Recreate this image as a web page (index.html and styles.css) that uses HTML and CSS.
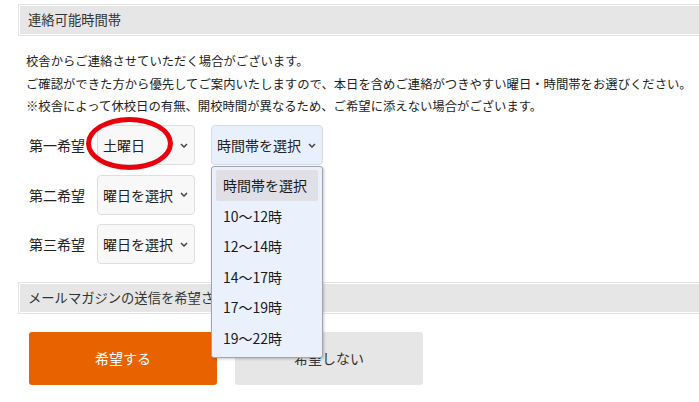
FILE: index.html
```html
<!DOCTYPE html>
<html lang="ja">
<head>
<meta charset="utf-8">
<title>連絡可能時間帯</title>
<link rel="stylesheet" href="styles.css">
</head>
<body>
<div class="page">
  <div class="sec-head">連絡可能時間帯</div>
  <div class="intro">
    <p>校舎からご連絡させていただく場合がございます。</p>
    <p>ご確認ができた方から優先してご案内いたしますので、本日を含めご連絡がつきやすい曜日・時間帯をお選びください。</p>
    <p>※校舎によって休校日の有無、開校時間が異なるため、ご希望に添えない場合がございます。</p>
  </div>
  <div class="rows">
    <div class="row">
      <span class="label">第一希望</span>
      <div class="sel day"><span>土曜日</span><svg class="chev" viewBox="0 0 8 5"><path d="M1 1l3 3 3-3"/></svg></div>
      <div class="sel time open"><span>時間帯を選択</span><svg class="chev" viewBox="0 0 8 5"><path d="M1 1l3 3 3-3"/></svg>
        <ul class="dropdown">
          <li class="hl">時間帯を選択</li>
          <li>10〜12時</li>
          <li>12〜14時</li>
          <li>14〜17時</li>
          <li>17〜19時</li>
          <li>19〜22時</li>
        </ul>
      </div>
      <div class="circle"></div>
    </div>
    <div class="row">
      <span class="label">第二希望</span>
      <div class="sel day"><span>曜日を選択</span><svg class="chev" viewBox="0 0 8 5"><path d="M1 1l3 3 3-3"/></svg></div>
    </div>
    <div class="row">
      <span class="label">第三希望</span>
      <div class="sel day"><span>曜日を選択</span><svg class="chev" viewBox="0 0 8 5"><path d="M1 1l3 3 3-3"/></svg></div>
    </div>
  </div>
  <div class="sec-head sec2">メールマガジンの送信を希望されますか</div>
  <div class="buttons">
    <div class="btn yes">希望する</div>
    <div class="btn no">希望しない</div>
  </div>
</div>
</body>
</html>
```
FILE: styles.css
```css
html, body {
  margin: 0;
  padding: 0;
  background: #fff;
}
body {
  width: 699px;
  height: 402px;
  overflow: hidden;
  font-family: "Noto Sans CJK JP", "Noto Sans", sans-serif;
  color: #222;
}
.page {
  padding-top: 5px;
}
.sec-head {
  margin-left: 19px;
  margin-right: -20px;
  height: 30px;
  box-sizing: border-box;
  border: 1px solid #fff;
  box-shadow: 0 0 0 1px #e3e3e3;
  background: #e6e6e6;
  padding-left: 8px;
  font-size: 13.3px;
  line-height: 28px;
  color: #333;
  white-space: nowrap;
  overflow: hidden;
}
.intro {
  margin: 15px 0 0 26px;
  font-size: 12.35px;
  line-height: 22.5px;
}
.intro p {
  margin: 0;
  white-space: nowrap;
}
.rows {
  margin-top: 7.5px;
  display: flex;
  flex-direction: column;
  gap: 9.5px;
}
.row {
  position: relative;
  display: flex;
  align-items: center;
  height: 40px;
  padding-left: 29px;
  font-size: 14px;
}
.label {
  width: 56px;
  margin-right: 12px;
  white-space: nowrap;
}
.sel {
  position: relative;
  height: 40px;
  box-sizing: border-box;
  border: 1px solid #dedede;
  border-radius: 4px;
  background: #f8f8f8;
  display: flex;
  align-items: center;
  justify-content: space-between;
  padding: 0 6px 0 5px;
  white-space: nowrap;
}
.sel.day {
  width: 98px;
}
.sel.time {
  width: 112px;
  margin-left: 16px;
}
.sel.open {
  background: #e8f0fe;
  border-color: #d6dbe4;
}
.chev {
  width: 8px;
  height: 5px;
  flex: none;
  fill: none;
  stroke: #444;
  stroke-width: 1.5;
}
.dropdown {
  position: absolute;
  left: -1px;
  top: 40px;
  width: 112px;
  height: 192px;
  box-sizing: border-box;
  margin: 0;
  padding: 3px 4px;
  list-style: none;
  background: #eaf1fc;
  border: 1px solid #a3a3a8;
  border-radius: 3px;
  box-shadow: 1px 1px 3px rgba(0, 0, 0, 0.22);
  z-index: 5;
}
.dropdown li {
  height: 30.6px;
  line-height: 30.6px;
  padding-left: 7px;
  border-radius: 2px;
  font-size: 14px;
  color: #1a1a1a;
}
.dropdown li.hl {
  background: #dfdfe5;
}
.circle {
  position: absolute;
  left: 86px;
  top: -8px;
  width: 87px;
  height: 53px;
  box-sizing: border-box;
  border: 5px solid #e8000d;
  border-radius: 50%;
  z-index: 3;
}
.sec2 {
  margin-top: 18.5px;
}
.buttons {
  display: flex;
  gap: 18px;
  margin: 19px 0 0 29px;
}
.btn {
  width: 188px;
  height: 53px;
  border-radius: 3px;
  display: flex;
  align-items: center;
  justify-content: center;
  font-size: 14px;
}
.btn.yes {
  background: #e96200;
  color: #fff;
}
.btn.no {
  background: #e6e6e6;
  color: #333;
}
```
